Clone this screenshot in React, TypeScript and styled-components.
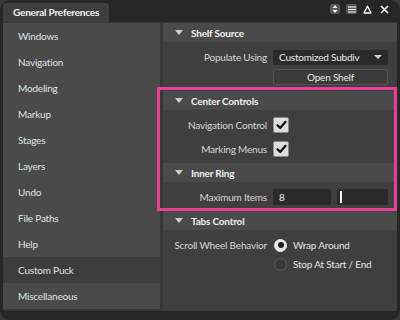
import React from "react";
import styled, { createGlobalStyle } from "styled-components";

const Global = createGlobalStyle`
  html, body { margin: 0; padding: 0; background: #3a3a3a; }
  body { font-family: Lato, "Open Sans", sans-serif; letter-spacing: -0.2px; }
  * { box-sizing: border-box; }
`;

const Window = styled.div`
  position: relative;
  width: 400px;
  height: 320px;
  background: #262626;
  border-radius: 10px;
  overflow: hidden;
  display: flex;
  flex-direction: column;
  padding: 0 3px 9px 3px;
`;

const TitleBar = styled.div`
  height: 22px;
  display: flex;
  align-items: flex-end;
  justify-content: space-between;
`;

const Tab = styled.div`
  height: 19px;
  padding: 0 10px;
  background: #3f3f3f;
  border-radius: 4px 4px 0 0;
  color: #f2f2f2;
  font-weight: 700;
  font-size: 10px;
  line-height: 19px;
`;

const TitleIcons = styled.div`
  align-self: flex-start;
  margin-top: 4px;
  margin-right: 8px;
  display: flex;
  align-items: center;
  gap: 6px;
`;

const IconBox = styled.div<{ $w: number }>`
  width: ${(p) => p.$w}px;
  height: 10px;
  border-radius: 2px;
  background: #575757;
  display: flex;
  align-items: center;
  justify-content: center;
`;

const Body = styled.div`
  flex: 1;
  display: flex;
  gap: 3px;
  background: #373737;
  padding-top: 1px;
`;

const Sidebar = styled.div`
  width: 157px;
  display: flex;
  flex-direction: column;
`;

const NavItem = styled.div<{ $active?: boolean }>`
  height: 26px;
  padding-left: 15px;
  display: flex;
  align-items: center;
  background: ${(p) => (p.$active ? "#3d3d3d" : "#4a4a4a")};
  color: #dfe3e6;
  font-size: 10px;
`;

const Panel = styled.div`
  flex: 1;
  background: #3f3f3f;
  display: flex;
  flex-direction: column;
`;

const SectionHeader = styled.div`
  height: 19px;
  background: #4a4a4a;
  display: flex;
  align-items: center;
  gap: 8px;
  padding-left: 12px;
  color: #f0f0f0;
  font-weight: 700;
  font-size: 10px;
`;

const Tri = styled.span`
  width: 0;
  height: 0;
  border-left: 4px solid transparent;
  border-right: 4px solid transparent;
  border-top: 5px solid #d0d0d0;
`;

const SectionBody = styled.div<{ $gap: number }>`
  padding: 7px 9px 6px 0;
  display: flex;
  flex-direction: column;
  gap: ${(p) => p.$gap}px;
`;

const Row = styled.div<{ $top?: boolean }>`
  display: grid;
  grid-template-columns: 104px 1fr;
  column-gap: 6px;
  align-items: ${(p) => (p.$top ? "start" : "center")};
  min-height: 16px;
`;

const Label = styled.div`
  text-align: right;
  color: #d6d6d6;
  font-size: 10px;
  line-height: 16px;
  white-space: nowrap;
`;

const Combo = styled.div`
  height: 15px;
  background: #2a2a2a;
  border-radius: 2px;
  display: flex;
  align-items: center;
  justify-content: space-between;
  padding: 0 6px 0 6px;
  color: #ececec;
  font-size: 10px;
`;

const DownArrow = styled.span`
  width: 0;
  height: 0;
  border-left: 4px solid transparent;
  border-right: 4px solid transparent;
  border-top: 4px solid #d0d0d0;
`;

const Button = styled.div`
  height: 16px;
  background: #3b3b3b;
  border: 1px solid #555;
  border-radius: 2px;
  display: flex;
  align-items: center;
  justify-content: center;
  color: #e6e6e6;
  font-size: 10px;
`;

const Check = styled.div`
  width: 16px;
  height: 16px;
  background: #dcdcdc;
  border: 1px solid #8a8a8a;
  border-radius: 2px;
  display: flex;
  align-items: center;
  justify-content: center;
`;

const Fields = styled.div`
  display: flex;
  gap: 6px;
`;

const Field = styled.div<{ $w: number }>`
  width: ${(p) => p.$w}px;
  height: 16px;
  background: #2a2a2a;
  border-radius: 2px;
  display: flex;
  align-items: center;
  padding-left: 6px;
  color: #ececec;
  font-size: 10px;
`;

const Handle = styled.div`
  width: 2px;
  height: 12px;
  background: #f4f4f4;
  margin-left: -3px;
`;

const Radios = styled.div`
  display: flex;
  flex-direction: column;
  gap: 3px;
`;

const RadioRow = styled.div`
  height: 16px;
  display: flex;
  align-items: center;
  gap: 6px;
  color: #e4e4e4;
  font-size: 10px;
  padding-left: 1px;
`;

const RadioCircle = styled.div<{ $on?: boolean }>`
  width: 13px;
  height: 13px;
  border-radius: 50%;
  background: ${(p) => (p.$on ? "#e8e8e8" : "#3a3a3a")};
  border: 1px solid ${(p) => (p.$on ? "#e8e8e8" : "#5a5a5a")};
  display: flex;
  align-items: center;
  justify-content: center;
  &::after {
    content: "";
    display: ${(p) => (p.$on ? "block" : "none")};
    width: 6px;
    height: 6px;
    border-radius: 50%;
    background: #1e1e1e;
  }
`;

const Highlight = styled.div`
  position: absolute;
  left: 157px;
  top: 87px;
  width: 240px;
  height: 124px;
  border: 3px solid #ea3f96;
  pointer-events: none;
`;

const CheckMark = () => (
  <svg width="11" height="10" viewBox="0 0 11 10">
    <path d="M1.5 5.2 L4.2 8 L9.5 1.8" fill="none" stroke="#111" strokeWidth="2.2" strokeLinecap="round" strokeLinejoin="round" />
  </svg>
);

const items = [
  "Windows",
  "Navigation",
  "Modeling",
  "Markup",
  "Stages",
  "Layers",
  "Undo",
  "File Paths",
  "Help",
  "Custom Puck",
  "Miscellaneous",
];

const Section: React.FC<{ title: string; gap?: number; children: React.ReactNode }> = ({ title, gap = 8, children }) => (
  <>
    <SectionHeader>
      <Tri />
      {title}
    </SectionHeader>
    <SectionBody $gap={gap}>{children}</SectionBody>
  </>
);

export default function App() {
  return (
    <>
      <Global />
      <Window>
        <TitleBar>
          <Tab>General Preferences</Tab>
          <TitleIcons>
            <IconBox $w={10}>
              <svg width="6" height="8" viewBox="0 0 6 8">
                <path d="M3 0 L5.5 3 H0.5 Z M3 8 L5.5 5 H0.5 Z" fill="#fff" />
              </svg>
            </IconBox>
            <IconBox $w={11}>
              <svg width="8" height="7" viewBox="0 0 8 7">
                <path d="M0 1 H8 M0 3.5 H8 M0 6 H8" stroke="#fff" strokeWidth="1.2" />
              </svg>
            </IconBox>
            <svg width="9" height="9" viewBox="0 0 9 9">
              <path d="M4.5 1.2 L8 8 H1 Z" fill="none" stroke="#fff" strokeWidth="1.4" strokeLinejoin="round" />
            </svg>
            <svg width="9" height="9" viewBox="0 0 9 9" style={{ marginLeft: 2 }}>
              <path d="M1 1 L8 8 M8 1 L1 8" stroke="#fff" strokeWidth="1.5" />
            </svg>
          </TitleIcons>
        </TitleBar>
        <Body>
          <Sidebar>
            {items.map((it) => (
              <NavItem key={it} $active={it === "Custom Puck"}>
                {it}
              </NavItem>
            ))}
          </Sidebar>
          <Panel>
            <Section title="Shelf Source" gap={4}>
              <Row>
                <Label>Populate Using</Label>
                <Combo>
                  Customized Subdiv
                  <DownArrow />
                </Combo>
              </Row>
              <Row>
                <span />
                <Button>Open Shelf</Button>
              </Row>
            </Section>
            <Section title="Center Controls">
              <Row>
                <Label>Navigation Control</Label>
                <Check>
                  <CheckMark />
                </Check>
              </Row>
              <Row>
                <Label>Marking Menus</Label>
                <Check>
                  <CheckMark />
                </Check>
              </Row>
            </Section>
            <Section title="Inner Ring">
              <Row>
                <Label>Maximum Items</Label>
                <Fields>
                  <Field $w={58}>8</Field>
                  <Field $w={51}>
                    <Handle />
                  </Field>
                </Fields>
              </Row>
            </Section>
            <Section title="Tabs Control">
              <Row $top>
                <Label>Scroll Wheel Behavior</Label>
                <Radios>
                  <RadioRow>
                    <RadioCircle $on />
                    Wrap Around
                  </RadioRow>
                  <RadioRow>
                    <RadioCircle />
                    Stop At Start / End
                  </RadioRow>
                </Radios>
              </Row>
            </Section>
          </Panel>
        </Body>
        <Highlight />
      </Window>
    </>
  );
}
